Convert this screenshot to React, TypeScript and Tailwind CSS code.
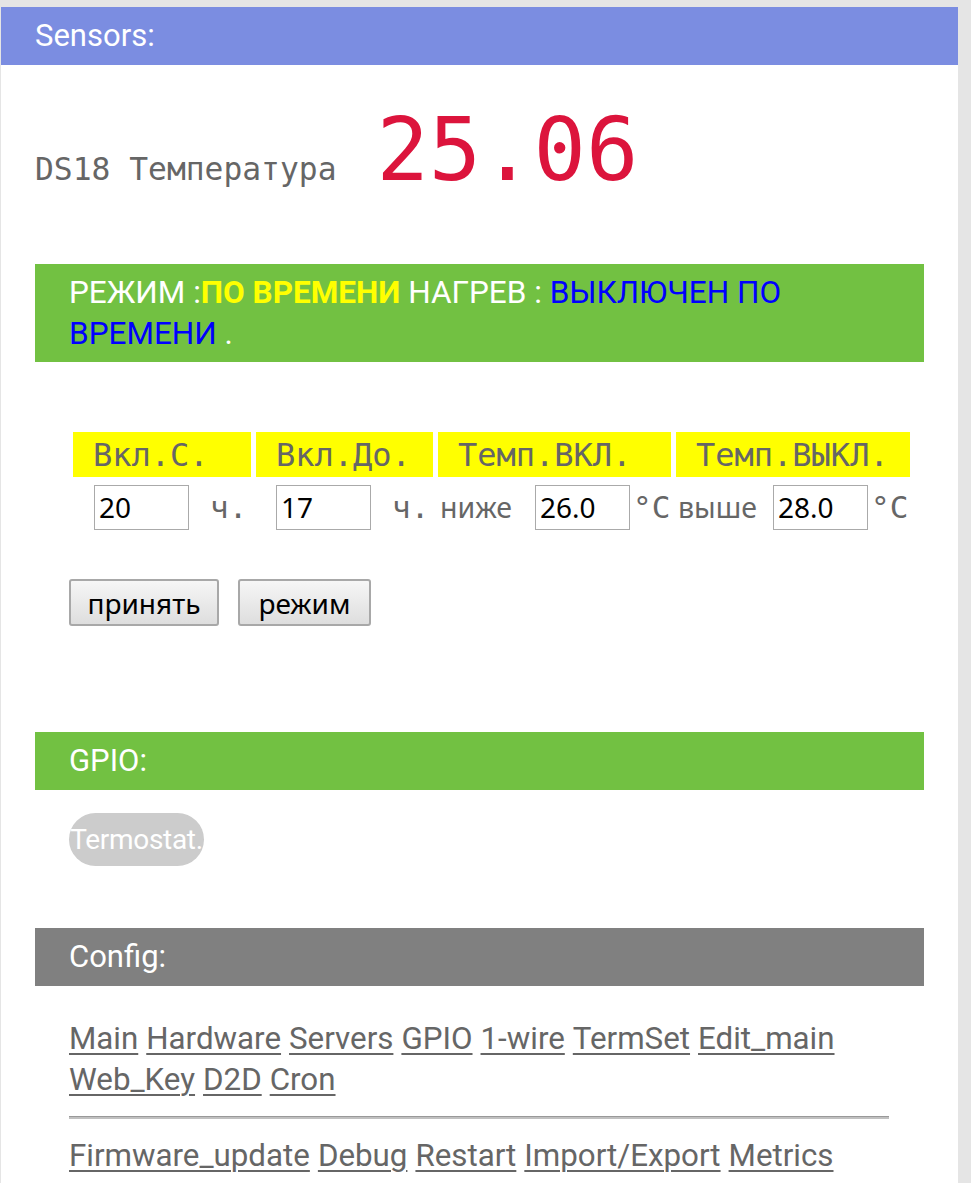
import React from "react";

const mono = { fontFamily: '"DejaVu Sans Mono", monospace' };

export default function App() {
  const links1 = ["Main", "Hardware", "Servers", "GPIO", "1-wire", "TermSet", "Edit_main", "Web_Key", "D2D", "Cron"];
  const links2 = ["Firmware_update", "Debug", "Restart", "Import/Export", "Metrics"];
  return (
    <div className="min-h-screen bg-[#e5e5e5] pt-[7px] pl-[1px] font-['Roboto',sans-serif]">
      <div className="w-[957px] bg-white min-h-[1176px]">
        <div className="h-[58px] bg-[#7b8de1] text-white text-[31px] pl-[34px] flex items-center">Sensors:</div>
        <div className="px-[34px]">
          <div className="flex items-baseline pt-[42px] h-[199px]">
            <span className="font-['DejaVu_Sans_Mono',monospace] text-[31.3px] text-[#666]">DS18 Температура</span>
            <span className="font-['DejaVu_Sans_Mono',monospace] text-[87px] leading-none text-[#dc143c] ml-[40px]">25.06</span>
          </div>
          <div className="bg-[#72c142] px-[34px] py-[8px] text-[31.5px] leading-[41px] text-white">
            РЕЖИМ :<b className="text-[#ffff00]">ПО ВРЕМЕНИ</b> НАГРЕВ : <span className="text-[#0000ff]">ВЫКЛЮЧЕН ПО ВРЕМЕНИ</span> .
          </div>
          <div className="pl-[38px] pt-[70px]">
            <div className="grid grid-cols-[178px_177px_233px_234px] gap-x-[5px] gap-y-[7px]">
              {["Вкл.С.", "Вкл.До.", "Темп.ВКЛ.", "Темп.ВЫКЛ."].map((t) => (
                <div key={t} className="bg-[#ffff00] h-[45px] flex items-center pl-[20px] text-[32px] text-[#666] font-['DejaVu_Sans_Mono',monospace]">{t}</div>
              ))}
              <div className="flex items-center h-[46px] pl-[21px]">
                <Inp v="20" />
                <span className="ml-[21px] text-[31px] text-[#666]" style={mono}>ч.</span>
              </div>
              <div className="flex items-center h-[46px] pl-[20px]">
                <Inp v="17" />
                <span className="ml-[21px] text-[31px] text-[#666]" style={mono}>ч.</span>
              </div>
              <div className="flex items-center h-[46px] pl-[2px]">
                <span className="text-[28.5px] text-[#666] font-['Noto_Sans',sans-serif] w-[95px]">ниже</span>
                <Inp v="26.0" />
                <span className="ml-[3px] text-[31px] text-[#666]" style={mono}>°C</span>
              </div>
              <div className="flex items-center h-[46px] pl-[2px]">
                <span className="text-[28.5px] text-[#666] font-['Noto_Sans',sans-serif] w-[95px]">выше</span>
                <Inp v="28.0" />
                <span className="ml-[3px] text-[31px] text-[#666]" style={mono}>°C</span>
              </div>
            </div>
          </div>
          <div className="flex gap-[19px] pl-[34px] pt-[49px]">
            <Btn t="принять" w="w-[150px]" />
            <Btn t="режим" w="w-[133px]" />
          </div>
          <div className="mt-[106px] h-[58px] bg-[#72c142] text-white text-[31px] pl-[34px] flex items-center">GPIO:</div>
          <div className="pl-[34px] pt-[23px]">
            <span className="inline-flex items-center justify-center h-[53px] w-[135px] rounded-full bg-[#cccccc] text-white text-[28px] tracking-[-0.3px]">Termostat.</span>
          </div>
          <div className="mt-[62px] h-[58px] bg-[#808080] text-white text-[31px] pl-[34px] flex items-center">Config:</div>
          <div className="pl-[34px] pr-[34px] pt-[32px] text-[31.3px] leading-[41px] text-[#666]">
            <div className="flex flex-wrap gap-x-[8px] w-[800px]">
              {links1.map((l) => (
                <a key={l} href="#" className="underline decoration-[2px] underline-offset-[4px]">{l}</a>
              ))}
            </div>
            <div className="mt-[16px] mb-[16px] h-[3px] w-[820px] bg-[#c0c0c0] border-t border-[#999]" />
            <div className="flex flex-wrap gap-x-[8px]">
              {links2.map((l) => (
                <a key={l} href="#" className="underline decoration-[2px] underline-offset-[4px]">{l}</a>
              ))}
            </div>
          </div>
        </div>
      </div>
    </div>
  );
}

function Inp({ v }: { v: string }) {
  return (
    <div className="w-[95px] h-[45px] border border-[#aaaaaa] bg-white flex items-center pl-[4px] text-[28px] text-black font-['Noto_Sans',sans-serif]">
      {v}
    </div>
  );
}

function Btn({ t, w }: { t: string; w: string }) {
  return (
    <div className={`${w} h-[47px] border-2 border-[#a8a8a8] rounded-[3px] bg-gradient-to-b from-[#f6f6f6] to-[#dedede] flex items-center justify-center text-[28px] text-black font-['Noto_Sans',sans-serif]`}>
      {t}
    </div>
  );
}
